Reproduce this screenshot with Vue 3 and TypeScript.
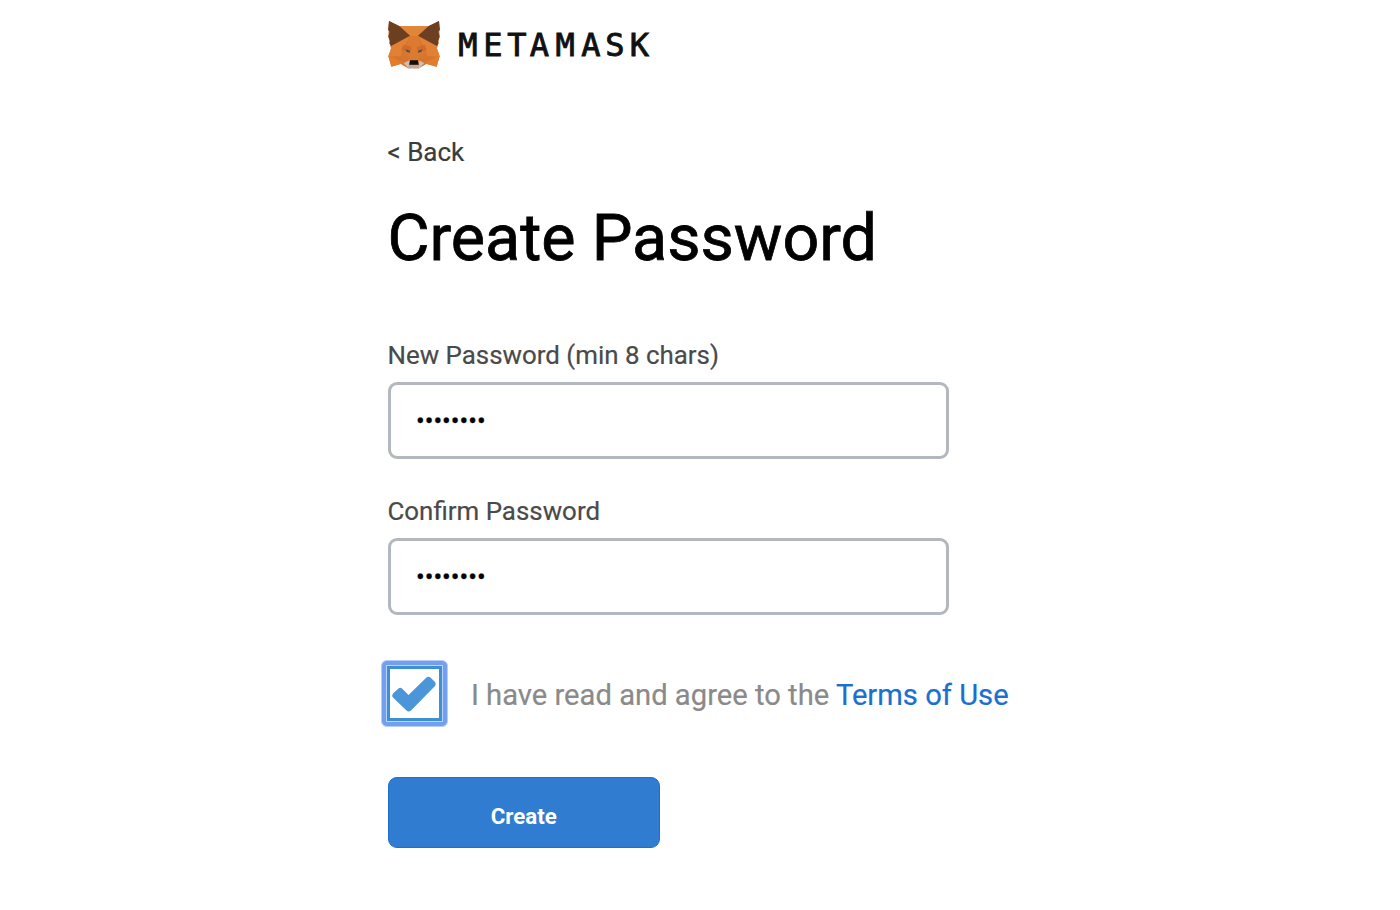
<script setup lang="ts">
import { ref } from "vue";

const password = ref("password");
const confirmPassword = ref("password");
const termsChecked = ref(true);

const brand = [
  { letter: "M", x: 10 },
  { letter: "E", x: 34.8 },
  { letter: "T", x: 59 },
  { letter: "A", x: 81.5 },
  { letter: "M", x: 107.2 },
  { letter: "A", x: 133 },
  { letter: "S", x: 156.8 },
  { letter: "K", x: 181.5 },
];
</script>

<template>
  <main class="first-time-flow">
    <header class="logo">
      <svg class="fox" viewBox="24 24 156 147" aria-hidden="true">
        <path fill="#d9762f" d="M27 27 58 43H146L177 27 179 73 171 110 179 132 170 164 139 156 117 169H84L62 156 34 164 25 132 33 110 25 73Z" />
        <path fill="#e08638" d="M58 43H146L116 72H89Z" />
        <path fill="#e08136" d="M33 103 90 72 66 113 62 134H25L33 110Z" />
        <path fill="#e08136" d="M171 103 114 72 138 113 142 134H179L171 110Z" />
        <path fill="#6c3f20" d="M27 27 58 42 90 71 33 102 28 94 30 86 25 74 29 59 24 53Z" />
        <path fill="#6c3f20" d="M177 27 146 42 114 71 171 102 176 94 174 86 179 74 175 59 180 53Z" />
        <path fill="#dc7a30" d="M90 72H114L123 103 116 145H88L81 103Z" />
        <path fill="#cd6c2c" d="M70 98 94 105 91 122 64 113ZM134 98 110 105 113 122 140 113Z" />
        <path fill="#e27d2d" d="M25 132H67L71 153 34 164ZM179 132H137L133 153 170 164Z" />
        <path fill="#d57430" d="M34 134 67 132 71 153ZM170 134 137 132 133 153Z" />
        <path fill="#d67430" d="M68 127 89 143 71 153ZM136 127 115 143 133 153Z" />
        <path fill="#cdbfb3" d="M71 153 89 145 87 160H117L115 145 133 153 118 169H85Z" />
        <path fill="#b9aca0" d="M86 159H118L117 169H84Z" />
        <path fill="#4c4c50" d="M77 112 89 116 90 122 80 119ZM127 112 115 116 114 122 124 119Z" />
        <path fill="#111" d="M90 145H114L116 158H88Z" />
      </svg>
      <svg class="wordmark" viewBox="0 0 196 40" role="img" aria-label="METAMASK">
        <text v-for="(item, index) in brand" :key="index" :x="item.x" y="31">{{ item.letter }}</text>
      </svg>
    </header>

    <a class="back" href="#" @click.prevent>&lt; Back</a>
    <h1>Create Password</h1>

    <form @submit.prevent>
      <label class="field">
        <span>New Password (min 8 chars)</span>
        <input v-model="password" type="password" />
      </label>
      <label class="field">
        <span>Confirm Password</span>
        <input v-model="confirmPassword" type="password" />
      </label>

      <div class="terms">
        <div class="focus-ring">
          <button
            class="checkbox"
            type="button"
            role="checkbox"
            :aria-checked="termsChecked"
            aria-label="Terms of Use"
            @click="termsChecked = !termsChecked"
          >
            <svg v-if="termsChecked" viewBox="0 0 48 48">
              <path d="M3 23.5 8.5 18.5Q10.5 17 12.5 19L18.5 25 36.5 7.5Q38.5 6 40.5 7.5L45 12Q46.5 14 45 16L21 40.5Q18.5 42.5 16.5 40.5L3 27.5Q1.5 25.5 3 23.5Z" />
            </svg>
          </button>
        </div>
        <span class="terms-text">I have read and agree to the <a href="#" @click.prevent>Terms of Use</a></span>
      </div>

      <button class="create" type="submit">Create</button>
    </form>
  </main>
</template>

<style>
body {
  margin: 0;
  background: #fff;
}
</style>

<style scoped>
.first-time-flow {
  box-sizing: border-box;
  height: 910px;
  padding: 20px 0 0 387.5px;
  font-family: Roboto, "Liberation Sans", sans-serif;
  overflow: hidden;
}

.logo {
  display: flex;
  align-items: flex-start;
  height: 50px;
}

.fox {
  width: 52px;
  height: 49px;
}

.wordmark {
  width: 196px;
  height: 40px;
  margin: 4.5px 0 0 18px;
}

.wordmark text {
  font: 32px "DejaVu Sans Mono", monospace;
  text-anchor: middle;
  fill: #111;
  stroke: #111;
  stroke-width: 0.9px;
}

.back {
  display: block;
  width: fit-content;
  margin-top: 65.5px;
  font-size: 26px;
  line-height: 32px;
  color: #3c3c3c;
  text-decoration: none;
  -webkit-text-stroke: 0.2px;
}

h1 {
  margin: 32.5px 0 0;
  font-size: 64.6px;
  font-weight: 400;
  line-height: 76px;
  color: #000;
  -webkit-text-stroke: 0.8px;
}

form {
  margin-top: 63px;
}

.field {
  display: block;
  width: 561px;
  margin-bottom: 36px;
}

.field span {
  display: block;
  font-size: 25.9px;
  line-height: 32px;
  color: #4a4a4a;
  -webkit-text-stroke: 0.2px;
}

.field input {
  display: block;
  box-sizing: border-box;
  width: 561.5px;
  height: 77px;
  margin-top: 11px;
  padding: 0 25.5px;
  border: 3px solid #b3b8bf;
  border-radius: 9px;
  outline: none;
  background: #fff;
  font-family: Roboto, sans-serif;
  font-size: 25.8px;
  color: #000;
  -webkit-text-stroke: 0.3px;
}

.terms {
  display: flex;
  align-items: center;
  gap: 23px;
  margin-top: 45px;
  font-size: 29.2px;
  line-height: 36px;
  color: #8a8a8a;
  -webkit-text-stroke: 0.2px;
}

.terms-text {
  padding-top: 2px;
}

.terms a {
  color: #1b6fce;
  text-decoration: none;
}

.focus-ring {
  box-sizing: border-box;
  width: 67px;
  height: 67px;
  margin-left: -6.6px;
  padding: 5px;
  border: 1px solid #b5cdf8;
  border-radius: 6px;
  background: #739ff0;
}

.checkbox {
  display: block;
  box-sizing: border-box;
  width: 55px;
  height: 55px;
  padding: 0;
  border: 3px solid #3f8fd2;
  background: #fff;
  box-shadow: 0 0 0 1px #b9d5fa;
}

.checkbox svg {
  display: block;
  width: 48px;
  height: 48px;
}

.checkbox path {
  fill: #4a96d9;
}

.create {
  display: block;
  box-sizing: border-box;
  width: 272.5px;
  height: 71px;
  margin-top: 50px;
  padding: 6px 0 0;
  border: 1px solid #1f6fcc;
  border-radius: 9px;
  background: #307cd1;
  font-family: Roboto, sans-serif;
  font-size: 22.3px;
  font-weight: 700;
  color: #fff;
}
</style>
